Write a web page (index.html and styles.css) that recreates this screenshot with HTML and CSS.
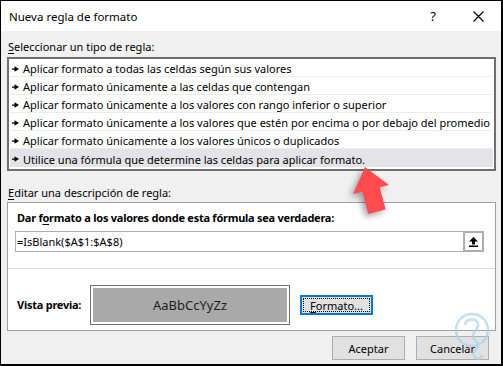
FILE: index.html
```html
<!DOCTYPE html>
<html lang="es">
<head>
<meta charset="utf-8">
<title>Nueva regla de formato</title>
<link rel="stylesheet" href="styles.css">
</head>
<body>
<div class="win">
  <div class="titlebar">
    <span class="title">Nueva regla de formato</span>
    <span class="help">?</span>
    <span class="close"><svg width="11" height="11" viewBox="0 0 11 11"><path d="M0.5 0.5L10.5 10.5M10.5 0.5L0.5 10.5" stroke="#000" stroke-width="1.1" fill="none"/></svg></span>
  </div>
  <div class="body">
    <div class="label"><u>S</u>eleccionar un tipo de regla:</div>
    <ul class="list">
      <li class="row"><svg class="bullet" width="7" height="6" viewBox="0 0 7 6"><path d="M0 2.5h3v1.2H0z M2.5 0.2L7 3L2.5 5.8z" fill="#000"/></svg><span>Aplicar formato a todas las celdas según sus valores</span></li>
      <li class="row"><svg class="bullet" width="7" height="6" viewBox="0 0 7 6"><path d="M0 2.5h3v1.2H0z M2.5 0.2L7 3L2.5 5.8z" fill="#000"/></svg><span>Aplicar formato únicamente a las celdas que contengan</span></li>
      <li class="row"><svg class="bullet" width="7" height="6" viewBox="0 0 7 6"><path d="M0 2.5h3v1.2H0z M2.5 0.2L7 3L2.5 5.8z" fill="#000"/></svg><span>Aplicar formato únicamente a los valores con rango inferior o superior</span></li>
      <li class="row"><svg class="bullet" width="7" height="6" viewBox="0 0 7 6"><path d="M0 2.5h3v1.2H0z M2.5 0.2L7 3L2.5 5.8z" fill="#000"/></svg><span>Aplicar formato únicamente a los valores que estén por encima o por debajo del promedio</span></li>
      <li class="row"><svg class="bullet" width="7" height="6" viewBox="0 0 7 6"><path d="M0 2.5h3v1.2H0z M2.5 0.2L7 3L2.5 5.8z" fill="#000"/></svg><span>Aplicar formato únicamente a los valores únicos o duplicados</span></li>
      <li class="row sel"><svg class="bullet" width="7" height="6" viewBox="0 0 7 6"><path d="M0 2.5h3v1.2H0z M2.5 0.2L7 3L2.5 5.8z" fill="#000"/></svg><span>Utilice una fórmula que determine las celdas para aplicar formato.</span></li>
    </ul>
    <div class="label label2"><u>E</u>ditar una descripción de regla:</div>
    <div class="panel">
      <div class="plabel">Dar f<u>o</u>rmato a los valores donde esta fórmula sea verdadera:</div>
      <div class="input">
        <span class="itext">=IsBlank($A$1:$A$8)</span>
        <span class="ibtn"><svg width="9" height="10" viewBox="0 0 9 10"><path d="M4.5 0L9 4.5H6V7.5H3V4.5H0z" fill="#000"/><rect x="0" y="8.5" width="9" height="1.5" fill="#000"/></svg></span>
      </div>
      <div class="sep"></div>
      <div class="prow">
        <span class="plabel vlabel">Vista previa:</span>
        <div class="preview"><div class="pinner">AaBbCcYyZz</div></div>
        <div class="fmt"><span class="focus"><u>F</u>ormato...</span></div>
      </div>
    </div>
    <div class="buttons">
      <div class="btn">Aceptar</div>
      <div class="btn">Cancelar</div>
    </div>
  </div>
  <svg class="redarrow" width="80" height="65" viewBox="0 0 80 65"><polygon points="35,7 59,25 49.7,27.2 55.7,49.4 38.3,54 32.3,31.8 23,34" fill="#ff4b4e"/></svg>
  <svg class="watermark" width="52" height="58" viewBox="0 0 52 58"><circle cx="24" cy="22" r="16" fill="none" stroke="#a9d3ea" stroke-width="2.5"/><path d="M17 16c2-6 12-6 13 0c1 5-6 7-5 13c1 5 6 4 5 9c-1 4-6 5-4 10c2 4 7 3 8 0" fill="none" stroke="#a9d3ea" stroke-width="2.5" stroke-linecap="round"/></svg>
</div>
</body>
</html>
```

FILE: styles.css
```css
* { box-sizing: border-box; }
html, body { margin: 0; padding: 0; background: #fff; }
body { font-family: "Noto Sans", "Open Sans", sans-serif; font-size: 11px; color: #000; }
u { text-decoration: underline; text-underline-offset: 2px; }

.win {
  position: relative;
  width: 503px;
  height: 366px;
  border-style: solid;
  border-color: #000;
  border-width: 1px 2px 2px 1px;
  background: #f0f0f0;
  overflow: hidden;
}

.titlebar {
  height: 30px;
  background: #fff;
  display: flex;
  align-items: center;
}
.title { flex: 1; padding-left: 8px; font-size: 11.5px; }
.help { width: 16px; margin-right: 14px; text-align: center; font-size: 13px; }
.close { width: 46px; height: 30px; display: flex; align-items: center; justify-content: center; }

.body { padding: 0 5px 0 6px; }

.label { margin-top: 8px; height: 16px; line-height: 16px; padding-left: 1px; white-space: nowrap; }
.label2 { margin-top: 14px; }

.list {
  list-style: none;
  margin: 2px 0 0 0;
  padding: 0 1px 2px 1px;
  width: 489px;
  height: 114px;
  border: 2px solid #6f6f6f;
  background: #fff;
}
.row {
  height: 18px;
  padding: 2px 0 0 2px;
  display: flex;
  align-items: center;
  border-bottom: 1px solid #ececec;
  white-space: nowrap;
  margin-right: 1px;
}
.row.sel { background: #e3e3e8; border-bottom: none; margin-right: 0; }
.bullet { margin-right: 4px; flex: none; }

.panel {
  margin-top: 1px;
  width: 489px;
  height: 129px;
  border: 1px solid #a0a0a0;
  background: #fff;
  padding: 7px 11px 0 7px;
}
.plabel { height: 16px; line-height: 16px; margin-left: 2px; font-weight: 700; white-space: nowrap; letter-spacing: -0.25px; }

.input {
  margin-top: 5px;
  height: 21px;
  border: 1px solid #adadad;
  display: flex;
  align-items: center;
}
.itext { flex: 1; padding-left: 1px; line-height: 19px; }
.ibtn {
  width: 21px;
  height: 21px;
  margin: -1px -1px -1px 0;
  border: 2px solid #adadad;
  background: #fff;
  display: flex;
  align-items: center;
  justify-content: center;
}

.sep { margin: 16px -11px 0 -7px; height: 1px; background: #dadada; }

.prow { margin-top: 16px; height: 40px; display: flex; align-items: center; }
.vlabel { width: 73px; flex: none; }
.preview {
  width: 200px;
  height: 40px;
  border: 1px solid #707070;
  padding: 2px;
  background: #fff;
}
.pinner {
  height: 100%;
  background: #a9a9a9;
  display: flex;
  align-items: center;
  justify-content: center;
  font-size: 13px;
  color: #1e1e1e;
}
.fmt {
  margin-left: 10px;
  width: 73px;
  height: 20px;
  border: 2px solid #0078d7;
  background: #e1e1e1;
  padding: 1px;
}
.focus {
  display: flex;
  height: 100%;
  align-items: center;
  justify-content: center;
  border: 1px dotted #000;
}

.buttons { margin-top: 5px; display: flex; justify-content: flex-end; gap: 11px; padding-right: 7px; }
.btn {
  width: 73px;
  height: 24px;
  border: 1px solid #adadad;
  background: #e1e1e1;
  display: flex;
  align-items: center;
  justify-content: center;
}

.redarrow { position: absolute; left: 329px; top: 159px; filter: drop-shadow(-3px 3px 3px rgba(0,0,0,0.35)); }
.watermark { position: absolute; left: 447px; top: 307px; opacity: 0.7; }
```
